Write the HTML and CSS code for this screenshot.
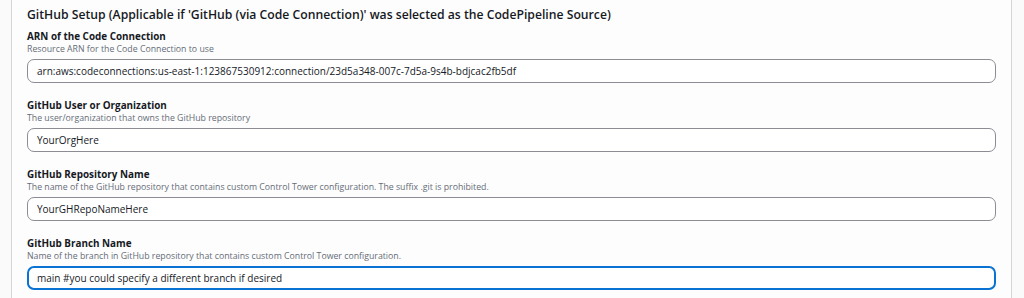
FILE: index.html
```html
<!DOCTYPE html>
<html lang="en">
<head>
  <meta charset="UTF-8" />
  <title>GitHub Setup</title>
  <link rel="stylesheet" href="styles.css">
</head>
<body>
  <div class="setup-panel">
    <h2 class="setup-title">GitHub Setup (Applicable if 'GitHub (via Code Connection)' was selected as the CodePipeline Source)</h2>
    <div class="field">
      <div class="field-label">ARN of the Code Connection</div>
      <div class="field-desc">Resource ARN for the Code Connection to use</div>
      <input class="field-input" type="text" value="arn:aws:codeconnections:us-east-1:123867530912:connection/23d5a348-007c-7d5a-9s4b-bdjcac2fb5df">
    </div>
    <div class="field">
      <div class="field-label">GitHub User or Organization</div>
      <div class="field-desc">The user/organization that owns the GitHub repository</div>
      <input class="field-input" type="text" value="YourOrgHere">
    </div>
    <div class="field">
      <div class="field-label">GitHub Repository Name</div>
      <div class="field-desc">The name of the GitHub repository that contains custom Control Tower configuration. The suffix .git is prohibited.</div>
      <input class="field-input" type="text" value="YourGHRepoNameHere">
    </div>
    <div class="field">
      <div class="field-label">GitHub Branch Name</div>
      <div class="field-desc">Name of the branch in GitHub repository that contains custom Control Tower configuration.</div>
      <input class="field-input focused" type="text" value="main #you could specify a different branch if desired">
    </div>
  </div>
</body>
</html>
```

FILE: styles.css
```css
html, body {
  box-sizing: border-box;
}
body {
  margin: 0;
  background: #fafafa;
  font-family: 'Open Sans', 'Noto Sans', Arial, sans-serif;
  color: #16191f;
  overflow: hidden;
}
.setup-panel {
  margin: 0 12px 0 11px;
  height: 298px;
  background: #fdfdfd;
  border-left: 1px solid #d5d5d5;
  border-right: 1px solid #d5d5d5;
  padding: 5px 15px 0 15px;
}
.setup-title {
  margin: 0 0 5px 0;
  font-size: 12.2px;
  font-weight: 600;
  line-height: 20px;
  color: #16191f;
}
.field {
  margin-bottom: 16px;
}
.field-label {
  font-size: 9.9px;
  font-weight: 700;
  line-height: 13px;
  color: #16191f;
}
.field-desc {
  font-size: 8.75px;
  line-height: 12px;
  color: #656c78;
  margin-bottom: 4px;
}
.field-input {
  display: block;
  box-sizing: border-box;
  width: 100%;
  height: 24px;
  margin: 0;
  padding: 0 9px;
  border: 1px solid #8c8c94;
  border-radius: 7px;
  background: #fff;
  font-family: 'Open Sans', 'Noto Sans', Arial, sans-serif;
  font-size: 10px;
  color: #16191f;
  outline: none;
}
.field-input.focused {
  border: 2px solid #0972d3;
  padding: 0 8px;
}
```
